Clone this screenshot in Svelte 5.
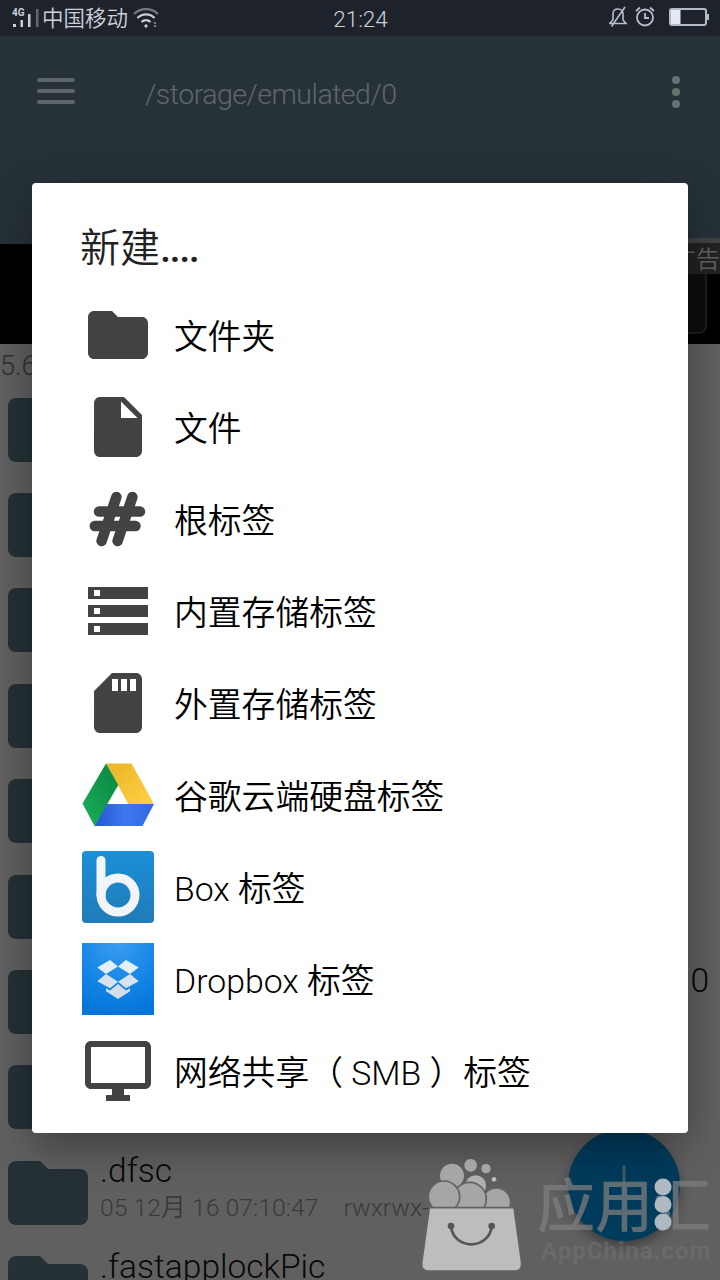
<script lang="ts">
	const items = [
		{ icon: 'folder', label: '文件夹' },
		{ icon: 'file', label: '文件' },
		{ icon: 'root', label: '根标签' },
		{ icon: 'storage', label: '内置存储标签' },
		{ icon: 'sdcard', label: '外置存储标签' },
		{ icon: 'drive', label: '谷歌云端硬盘标签' },
		{ icon: 'box', label: 'Box 标签' },
		{ icon: 'dropbox', label: 'Dropbox 标签' },
		{ icon: 'smb', label: '网络共享（ SMB ）标签' }
	];

	const glyphs: Record<string, string> = {
		folder: 'M10 4H4c-1.1 0-1.99.9-1.99 2L2 18c0 1.1.9 2 2 2h16c1.1 0 2-.9 2-2V8c0-1.1-.9-2-2-2h-8l-2-2z',
		file: 'M6 2c-1.1 0-1.99.9-1.99 2L4 20c0 1.1.89 2 1.99 2H18c1.1 0 2-.9 2-2V8l-6-6H6zm7 7V3.5L18.5 9H13z',
		storage:
			'M2 20h20v-4H2v4zm2-3h2v2H4v-2zM2 4v4h20V4H2zm4 3H4V5h2v2zm-4 7h20v-4H2v4zm2-3h2v2H4v-2z',
		sdcard:
			'M18 2h-8L4.02 8 4 20c0 1.1.9 2 2 2h12c1.1 0 2-.9 2-2V4c0-1.1-.9-2-2-2zm-6 6h-2V4h2v4zm3 0h-2V4h2v4zm3 0h-2V4h2v4z',
		smb: 'M21 2H3c-1.1 0-2 .9-2 2v12c0 1.1.9 2 2 2h7v2H8v2h8v-2h-2v-2h7c1.1 0 2-.9 2-2V4c0-1.1-.9-2-2-2zm0 14H3V4h18v12z'
	};

	type Row = { name?: string; date?: string; perms?: string; end?: string };
	const rows: Row[] = [
		{},
		{},
		{},
		{},
		{},
		{},
		{ end: '0' },
		{},
		{ name: '.dfsc', date: '05 12月 16 07:10:47', perms: 'rwxrwx---' },
		{ name: '.fastapplockPic' }
	];
</script>

<div class="screen">
	<div class="status">
		<div class="carrier">
			<svg width="28" height="24" viewBox="0 0 28 24" fill="#c9ced8">
				<text x="0" y="9" font-size="10" font-weight="700">4G</text>
				<rect x="1" y="17" width="3" height="3" />
				<rect x="8.500" y="13" width="2.500" height="7" />
				<rect x="16" y="7" width="2.500" height="13" />
				<rect x="24" y="2" width="2.500" height="18" opacity=".4" />
			</svg>
			<span>中国移动</span>
			<svg class="wifi" width="26" height="22" viewBox="0 0 26 22" fill="none" stroke="#c9ced8" stroke-width="2.200">
				<path d="M1 6a17 17 0 0 1 24 0" opacity=".5" />
				<path d="M4.500 10a12 12 0 0 1 17 0" />
				<path d="M8.500 14a6.500 6.500 0 0 1 9 0" />
				<circle cx="13" cy="18" r="1.200" fill="#c9ced8" stroke-width="1" />
				<path d="M22 14v5" stroke-dasharray="2 1" opacity=".5" />
			</svg>
		</div>
		<span class="clock">21:24</span>
		<div class="indicators">
			<svg width="20" height="22" viewBox="0 0 20 22" fill="none" stroke="#b9bfca" stroke-width="1.600">
				<path d="M1 17.500h17l-3-3.500V8c0-3-2-5-5-5S5 5 5 8v6l-3 3M3.500 20.500L17 1" />
			</svg>
			<svg width="20" height="22" viewBox="0 0 20 22" fill="none" stroke="#b9bfca" stroke-width="1.800">
				<circle cx="10" cy="11.500" r="8" />
				<path d="M10 7v5h4M1 5l4-3.500M15 1.500L19 5" />
			</svg>
			<svg class="battery" width="40" height="20" viewBox="0 0 40 20">
				<rect x="1" y="2" width="36" height="16" rx="2" fill="none" stroke="#b4bac6" stroke-width="2" />
				<rect x="2" y="3" width="9.500" height="14" fill="#e4e8f2" />
				<rect x="37" y="7" width="3" height="6" fill="#b4bac6" />
			</svg>
		</div>
	</div>

	<header class="appbar">
		<svg width="40" height="28" viewBox="0 0 40 28" stroke="#5e666a" stroke-width="4" stroke-linecap="round">
			<path d="M3 3h34M3 14h34M3 25h34" />
		</svg>
		<span class="path">/storage/emulated/0</span>
		<svg width="10" height="36" viewBox="0 0 10 36" fill="#66736d">
			<circle cx="5" cy="6" r="4" />
			<circle cx="5" cy="18" r="4" />
			<circle cx="5" cy="30" r="4" />
		</svg>
	</header>

	<div class="ad">
		<div class="ad-frame"></div>
		<span class="ad-tag">广告</span>
	</div>

	<main class="list">
		<p class="usage">5.6</p>
		{#each rows as row}
			<div class="row">
				<svg width="80" height="64" viewBox="2 4 20 16" preserveAspectRatio="none"><path d={glyphs.folder} /></svg>
				<div class="info">
					{#if row.name}<p class="name">{row.name}</p>{/if}
					{#if row.date}
						<p class="meta"><span>{row.date}</span><span>{row.perms}</span></p>
					{/if}
				</div>
				{#if row.end}<span class="end">{row.end}</span>{/if}
			</div>
		{/each}
	</main>

	<div class="fab">
		<svg width="20" height="20" viewBox="0 0 20 20"><path d="M10 0v20" stroke="#3f5a66" stroke-width="3" /></svg>
	</div>

	<div class="dialog" role="dialog">
		<h2>新建<span>....</span></h2>
		<ul>
			{#each items as item}
				<li>
					{#if glyphs[item.icon]}
						<svg width="72" height="72" viewBox="0 0 24 24" fill="#434343"><path d={glyphs[item.icon]} /></svg>
					{:else if item.icon === 'root'}
						<svg width="72" height="72" viewBox="0 0 72 72" stroke="#434343" stroke-width="10.500" stroke-linecap="round">
							<path d="M17 28.600h41M12.800 43H53.500M34.400 14L19.600 58M50.400 14L35.600 58" />
						</svg>
					{:else if item.icon === 'drive'}
						<svg width="72" height="72" viewBox="0 0 72 72">
							<defs>
								<linearGradient id="green" x1="0" y1="1" x2="1" y2="0">
									<stop offset="0" stop-color="#1cae5c" />
									<stop offset="1" stop-color="#07853f" />
								</linearGradient>
								<linearGradient id="yellow" x1="0" y1="0" x2="1" y2="1">
									<stop offset="0" stop-color="#e8b526" />
									<stop offset="1" stop-color="#ffd045" />
								</linearGradient>
								<linearGradient id="blue" x1="0" y1="0" x2="1" y2="0">
									<stop offset="0" stop-color="#2456cf" />
									<stop offset=".5" stop-color="#3c78f0" />
									<stop offset="1" stop-color="#3269e4" />
								</linearGradient>
							</defs>
							<path d="M24 4.500h25.500L72 45H46.300z" fill="url(#yellow)" />
							<path d="M24 45h48L60.500 67h-48z" fill="url(#blue)" />
							<path d="M24 4.500L36.300 26 12.500 67 .5 44.500z" fill="url(#green)" />
						</svg>
					{:else if item.icon === 'box'}
						<svg width="72" height="72" viewBox="0 0 72 72">
							<defs>
								<linearGradient id="boxbg" x1="0" y1="0" x2="0" y2="1">
									<stop offset="0" stop-color="#1a8fd8" />
									<stop offset="1" stop-color="#217bb8" />
								</linearGradient>
							</defs>
							<rect width="72" height="72" rx="4" fill="url(#boxbg)" />
							<g fill="none" stroke="#f1f5fa" stroke-width="9" stroke-linecap="round">
								<path d="M19 9.500V44" />
								<circle cx="36" cy="44" r="17" />
							</g>
						</svg>
					{:else}
						<svg width="72" height="72" viewBox="0 0 72 72">
							<defs>
								<radialGradient id="dropbg" cx=".5" cy="0" r="1">
									<stop offset="0" stop-color="#3a9df0" />
									<stop offset=".6" stop-color="#1484e4" />
									<stop offset="1" stop-color="#0575da" />
								</radialGradient>
							</defs>
							<rect width="72" height="72" fill="url(#dropbg)" />
							<path d="M28 17l8 6.500-12 7.500-8.700-6.500zM44 17l-8 6.500L48 31l8.700-6.500z" fill="#e2f0fa" />
							<path d="M24 31l12 7.700-8 6.600-12.700-7zM48 31l-12 7.700 8 6.600 12.700-7z" fill="#d7e3ee" />
							<path d="M36 41l-8 6.500-4-2.200v3L36 56l12-7.700v-3l-4 2.200z" fill="#d5dde6" />
						</svg>
					{/if}
					<span>{item.label}</span>
				</li>
			{/each}
		</ul>
	</div>

	<div class="watermark">
		<svg width="104" height="116" viewBox="60 110 312 348">
			<g fill="#a6a6a6">
				<circle cx="156" cy="166" r="36" />
				<circle cx="212" cy="135" r="19" />
				<circle cx="258" cy="145" r="14" />
				<circle cx="282" cy="177" r="7" fill="#bdbdbd" />
				<circle cx="227" cy="196" r="31" fill="#b0b0b0" />
				<g stroke="#626262" stroke-width="5">
					<circle cx="289" cy="246" r="43" />
					<circle cx="209" cy="236" r="50" />
					<circle cx="132" cy="229" r="47" />
				</g>
			</g>
			<path d="M88 262h254l23 166q1 24-20 24H84q-20 0-19-24z" fill="#bdbdbd" stroke="#626262" stroke-width="5" />
			<g fill="none" stroke="#555" stroke-width="8">
				<path d="M153 318c8 72 114 72 122 0" />
				<circle cx="153" cy="317" r="6" fill="#555" />
				<circle cx="275" cy="317" r="6" fill="#555" />
			</g>
		</svg>
		<div class="brand">
			<span class="brand-name">应用汇</span>
			<span class="brand-url">AppChina.com</span>
			<svg width="18" height="54" viewBox="0 0 18 54" fill="#aeb9c1">
				<circle cx="9" cy="9" r="8.500" />
				<circle cx="9" cy="26.500" r="8.500" />
				<circle cx="9" cy="44" r="8.500" />
			</svg>
		</div>
	</div>
</div>

<style>
	:global(body) {
		background: #606060;
	}
	.screen {
		position: relative;
		width: 720px;
		height: 1280px;
		overflow: hidden;
		display: flex;
		flex-direction: column;
		background: #606060;
		font-family: Roboto, 'Noto Sans CJK SC', sans-serif;
		font-weight: 350;
	}
	svg {
		flex: none;
		display: block;
	}
	p,
	h2,
	ul {
		margin: 0;
		padding: 0;
	}
	.status {
		flex: none;
		height: 36px;
		display: grid;
		grid-template-columns: 1fr auto 1fr;
		align-items: center;
		padding: 0 11px 0 12px;
		background: #1d222b;
		color: #ccd1da;
		font-size: 21.500px;
		line-height: 36px;
	}
	.carrier,
	.indicators {
		display: flex;
		align-items: center;
	}
	.carrier span {
		margin: 0 5px 0 2px;
	}
	.clock {
		font-size: 22.500px;
		padding-top: 1px;
	}
	.indicators {
		justify-content: flex-end;
		gap: 7px;
		margin-top: -3px;
	}
	.battery {
		margin-left: 7px;
	}
	.appbar {
		flex: none;
		height: 208px;
		box-sizing: border-box;
		display: flex;
		align-items: flex-start;
		padding: 38px 39px 0 36px;
		background: #263238;
	}
	.appbar svg:first-child {
		margin-top: 3px;
	}
	.path {
		flex: 1;
		margin: 3px 0 0 69px;
		font-size: 28.500px;
		letter-spacing: -0.500px;
		line-height: 36px;
		color: #5f676a;
	}
	.ad {
		position: relative;
		flex: none;
		height: 100px;
		background: #000;
	}
	.ad-frame {
		position: absolute;
		right: 13px;
		top: 0;
		width: 120px;
		height: 90px;
		box-sizing: border-box;
		border: 2px solid #1d1d1d;
		border-radius: 8px;
		background: #0d0d0d;
	}
	.ad-tag {
		position: absolute;
		right: 0;
		top: -6px;
		height: 36px;
		box-sizing: border-box;
		border-top: 5px solid #3f4344;
		background: #222;
		color: #626262;
		font-size: 24px;
		line-height: 34px;
	}
	.usage {
		height: 38px;
		padding-top: 4px;
		box-sizing: border-box;
		font-size: 27px;
		line-height: 36px;
		color: #303030;
	}
	.row {
		height: 95.400px;
		box-sizing: border-box;
		display: flex;
		align-items: center;
		padding: 0 11px 0 8px;
	}
	.row svg {
		fill: #243135;
	}
	.info {
		flex: 1;
		align-self: flex-start;
		padding: 7px 0 0 12px;
		white-space: nowrap;
	}
	.name,
	.end {
		font-size: 33.500px;
		line-height: 38px;
		color: #080808;
	}
	.end {
		margin-top: -43px;
	}
	.meta {
		display: flex;
		gap: 25px;
		font-size: 24.800px;
		line-height: 36px;
		color: #3a3a3a;
	}
	.fab {
		position: absolute;
		left: 568px;
		top: 1129px;
		width: 112px;
		height: 112px;
		border-radius: 50%;
		background: #003b5b;
		box-shadow: 0 5px 12px rgba(0, 0, 0, 0.35);
		display: grid;
		place-items: center;
	}
	.fab svg {
		margin-top: -20px;
	}
	.dialog {
		position: absolute;
		left: 32px;
		top: 183px;
		width: 656px;
		height: 950px;
		box-sizing: border-box;
		border-radius: 4px;
		background: #fff;
		box-shadow: 0 14px 42px rgba(0, 0, 0, 0.35);
	}
	h2 {
		height: 106px;
		padding: 36px 48px 0;
		box-sizing: border-box;
		font-size: 40px;
		line-height: 60px;
		font-weight: 350;
		color: #222;
	}
	h2 span {
		font-weight: 500;
		letter-spacing: -1.500px;
	}
	ul {
		list-style: none;
	}
	li {
		height: 92px;
		display: flex;
		align-items: center;
		gap: 20px;
		padding-left: 50px;
		font-size: 33.800px;
		line-height: 48px;
		color: #000;
	}
	li span {
		padding-top: 5px;
		white-space: pre;
	}
	.watermark {
		position: absolute;
		left: 420px;
		top: 1157px;
		display: flex;
		gap: 13px;
	}
	.brand {
		position: relative;
		display: flex;
		flex-direction: column;
		padding-top: 16px;
	}
	.brand-name {
		font-size: 58px;
		line-height: 68px;
		font-weight: 500;
		color: rgba(125, 125, 125, 0.75);
	}
	.brand-url {
		margin: -2px 0 0 4px;
		font-size: 24px;
		line-height: 24px;
		font-weight: 700;
		letter-spacing: 1px;
		color: rgba(120, 120, 120, 0.45);
	}
	.brand svg {
		position: absolute;
		left: 117px;
		top: 21px;
	}
</style>
